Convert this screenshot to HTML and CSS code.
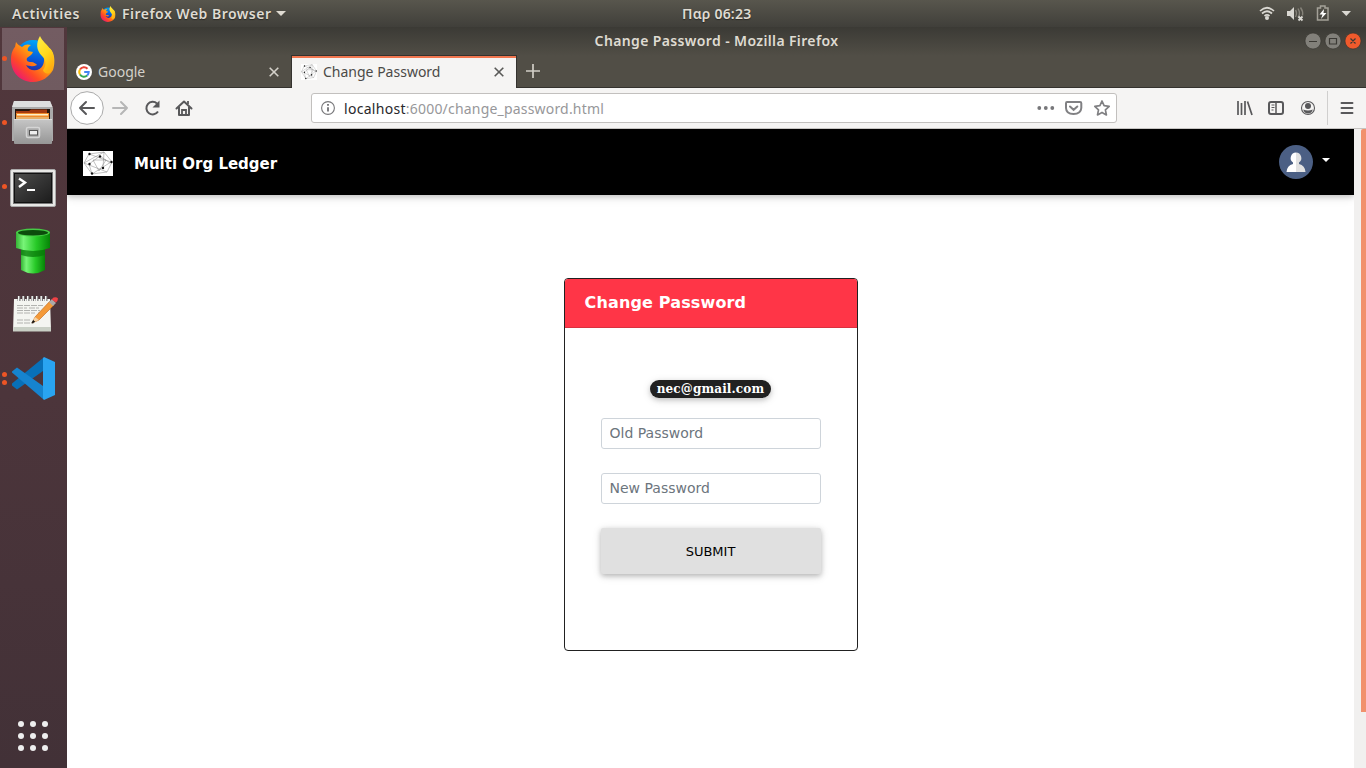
FILE: index.html
```html
<!DOCTYPE html>
<html lang="en">
<head>
<meta charset="utf-8">
<title>Change Password</title>
<link rel="stylesheet" href="styles.css">
</head>
<body>
<svg class="defs" width="0" height="0">
  <defs>
    <linearGradient id="ffOrange" x1="0.9" y1="0.1" x2="0.1" y2="0.9"><stop offset="0" stop-color="#ffdf25"/><stop offset=".4" stop-color="#ff9a10"/><stop offset=".7" stop-color="#ff4a25"/><stop offset="1" stop-color="#e9127c"/></linearGradient>
    <linearGradient id="ffBlue" x1="0.6" y1="0" x2="0.4" y2="1"><stop offset="0" stop-color="#00a8fa"/><stop offset=".55" stop-color="#0756d8"/><stop offset="1" stop-color="#36188b"/></linearGradient>
    <linearGradient id="ffYellow" x1="0" y1="0" x2=".5" y2="1"><stop offset="0" stop-color="#fff04a"/><stop offset=".6" stop-color="#ffd81c"/><stop offset="1" stop-color="#ffae10"/></linearGradient>
    <linearGradient id="steel" x1="0" y1="0" x2="0" y2="1"><stop offset="0" stop-color="#c6c6c6"/><stop offset="1" stop-color="#969696"/></linearGradient>
    <linearGradient id="screen" x1="0" y1="0" x2="1" y2="1"><stop offset="0" stop-color="#4d4d4b"/><stop offset=".5" stop-color="#343434"/><stop offset="1" stop-color="#1d1d1d"/></linearGradient>
    <linearGradient id="pipe" x1="0" y1="0" x2="1" y2="0"><stop offset="0" stop-color="#35b535"/><stop offset=".22" stop-color="#78f478"/><stop offset=".6" stop-color="#27c927"/><stop offset="1" stop-color="#068406"/></linearGradient>
    <symbol id="firefox" viewBox="0 0 44 46">
      <circle cx="22" cy="22" r="18" fill="url(#ffBlue)"/>
      <path d="M5 6 C6 8 9 10 11 11 C14 8 17 8 20 9 C17 11 16 13 17 15 L22 16 C21 19 18 20 16 22 C15 25 17 26 20 26 C23 26 25 28 26 29 C22 31 18 30 15 29 C18 36 29 36 32 29 C34 24 33 20 31 15 L34 10 C39 12 40 13 41 15 C44 20 44 28 42 34 C38 41 31 46 22 46 C9 46 0 36 0 24 C0 17 2 13 4 11 Z" fill="url(#ffOrange)"/>
      <path d="M29 0 C31 5 36 8 40 14 C44 20 43 27 40 35 C38 39 33 38 32 34 C36 29 35 24 31 20 C25 14 25 7 29 0Z" fill="url(#ffYellow)"/>
    </symbol>
    <symbol id="network" viewBox="0 0 30 25">
      <rect width="30" height="25" fill="#fff"/>
      <path d="M1 12 6 3 21 1 29 11 24 21 9 23ZM6 3 28 11M28 11 9 23M1 12 21 1M6 13 17 5 27 12M10 9 23 9 16 20ZM1 12 24 21M6 13 9 23M21 1 20 17" fill="none" stroke="#777" stroke-width=".45"/>
      <g fill="#111"><circle cx="6.500" cy="3" r="1.200"/><circle cx="17" cy="5.500" r="1.200"/><circle cx="28.500" cy="11" r="1.200"/><circle cx="6.500" cy="13" r="1.200"/><circle cx="20" cy="17" r="1.200"/><circle cx="9" cy="22.500" r="1.200"/></g>
    </symbol>
  </defs>
</svg>

<header class="topbar">
  <span class="activities">Activities</span>
  <svg class="app-logo" width="16" height="16" viewBox="0 0 44 46"><use href="#firefox"/></svg>
  <span class="app-name">Firefox Web Browser</span>
  <i class="caret"></i>
  <span class="clock">Παρ 06:23</span>
  <svg class="tray" width="110" height="27" viewBox="0 0 110 27">
    <g fill="none" stroke="#dad8d2" stroke-width="1.700"><path d="M6 11Q13 4.500 20 11M8 13.500Q13 9 18 13.500M10.500 16Q13 13.800 15.500 16"/></g>
    <circle cx="13" cy="18" r="2" fill="#dad8d2"/>
    <path d="M33 11h3l4-4v13l-4-4h-3z" fill="#dad8d2"/>
    <path d="M41.500 10q2 3 0 7M44 8.500q3 5 0 9M46.500 7.500q3 4 2 8" stroke="#858279" stroke-width="1.400" fill="none"/>
    <path d="M44.500 16.500l4 4m0-4l-4 4" stroke="#dad8d2" stroke-width="1.800"/>
    <path d="M66.500 6v2h-3v12h10.500V8h-3V6z" fill="none" stroke="#a4a198" stroke-width="1.500"/>
    <path d="M70 9l-4.500 5.500h3L67 19l5.500-6h-3z" fill="#fff"/>
    <path d="M87.500 11h9.500l-4.700 5z" fill="#dad8d2"/>
  </svg>
</header>

<div class="desktop">
  <nav class="dock">
    <div class="dock-item active"><i class="dot"></i>
      <svg class="ff" width="44" height="46"><use href="#firefox"/></svg></div>
    <div class="dock-item"><i class="dot"></i>
      <svg width="44" height="44" viewBox="0 0 44 44">
        <path d="M3 0h36l3 7v33H1V7z" fill="#aaa"/><path d="M3 0h36l2.500 6H1z" fill="#dedede"/>
        <path d="M4 8h35v11H4z" fill="#24160f"/><path d="M5 10h13l2-1.500h16V18H5z" fill="#a53a10"/><path d="M5 12h33v6H5z" fill="#f08a2a"/><path d="M6 13h31v1.500H6z" fill="#fff0c8"/><path d="M5 16h33v3H5z" fill="#e7af69"/>
        <rect x="3" y="18" width="38" height="25" rx="1" fill="url(#steel)"/><path d="M3 18.500h38" stroke="#ddd"/><rect x="15.500" y="26.500" width="13" height="10" rx="1.500" fill="#aaa" stroke="#d5d5d5" stroke-width="1.500"/><rect x="18.500" y="29.500" width="8" height="4.500" fill="#eee" stroke="#555"/>
      </svg></div>
    <div class="dock-item"><i class="dot"></i>
      <svg class="term" width="46" height="38" viewBox="0 0 46 38">
        <rect x=".5" y=".5" width="45" height="37" rx="1.500" fill="#e8e8e6" stroke="#aaa"/><rect x="3.500" y="3.500" width="39" height="31" fill="#111" stroke="#777"/><path d="M5 5h36v28H5z" fill="url(#screen)"/><path d="M9 9.500l6 4-6 4.500" fill="none" stroke="#fff" stroke-width="2.400"/><path d="M17 21h8" stroke="#fff" stroke-width="2"/>
      </svg></div>
    <div class="dock-item">
      <svg width="36" height="46" viewBox="0 0 36 46">
        <path d="M6 21h24v21q-12 7-24 0z" fill="url(#pipe)"/><path d="M6 21h24v6q-12 4-24 0z" fill="#087a0a" opacity=".75"/>
        <path d="M1 4h34v16q-17 6-34 0z" fill="url(#pipe)"/><ellipse cx="18" cy="4.500" rx="17" ry="4" fill="#45ca45"/><ellipse cx="18" cy="4.700" rx="15" ry="2.800" fill="#0c4c0c"/>
      </svg></div>
    <div class="dock-item">
      <svg class="notes" width="46" height="38" viewBox="0 0 46 38">
        <path d="M2 4h36l1 32H1z" fill="#f4f5f1"/><path d="M1.500 32h37.500v4.500H1z" fill="#c9cfc5"/>
        <path d="M7 1v5m4.500-5v5M16 1v5m4.500-5v5M25 1v5m4.500-5v5M34 1v5" stroke="#666" stroke-width="2.800"/><path d="M6.700 1v5m4.500-5v5m4.500-5v5m4.500-5v5m4.500-5v5m4.500-5v5m4.500-5v5" stroke="#fff" stroke-width="1.300"/>
        <path d="M5 10.500h26M5 13h10m2 0h10M5 15.500h23M5 18h18m3 0h3M5 25h13M5 28h17" stroke="#aaaca8" stroke-width=".9" stroke-dasharray="6 1"/>
        <path d="M20 28l3-6L38 6l4 4-15 15z" fill="#f49a38" stroke="#bd6417" stroke-width=".6"/><path d="M20 28l3-6 4 3z" fill="#f5d2a4"/><path d="M20 28l1.200-2.500 1.500 1.200z" fill="#111" stroke="#111" stroke-width=".8"/><path d="M37 7l3-3 4 4-3 3z" fill="#aaa"/><path d="M39.500 4.500l2-2q3-1 4.500 1 0 2-2 4z" fill="#ef4145"/>
      </svg></div>
    <div class="dock-item"><i class="dot twin"></i>
      <svg width="43" height="43" viewBox="0 0 43 43">
        <path d="M31 1v13L5 32.500 0 28.500v-2z" fill="#0870b8"/><path d="M5 10.500L31 29v13L0 15.500v-1z" fill="#1684cf"/><path d="M31 1l1-1 11 5v33l-11 5-1-1z" fill="#29a4f1"/>
      </svg></div>
    <svg class="apps" width="34" height="34" viewBox="0 0 34 34"><g fill="#eee"><circle cx="5" cy="5" r="3"/><circle cx="17" cy="5" r="3"/><circle cx="29" cy="5" r="3"/><circle cx="5" cy="17" r="3"/><circle cx="17" cy="17" r="3"/><circle cx="29" cy="17" r="3"/><circle cx="5" cy="29" r="3"/><circle cx="17" cy="29" r="3"/><circle cx="29" cy="29" r="3"/></g></svg>
  </nav>

  <section class="window">
    <div class="titlebar">
      <span class="window-title">Change Password - Mozilla Firefox</span>
      <svg class="controls" width="58" height="18" viewBox="0 0 58 18">
        <g fill="#82807a" stroke="#34332e" stroke-width=".6"><circle cx="9" cy="9" r="8"/><circle cx="29" cy="9" r="8"/><circle cx="49" cy="9" r="8" fill="#f05a2c"/></g>
        <path d="M5 9.500h8M25.500 6.500h7v5.500h-7zM46.500 6.500l5 5m0-5l-5 5" fill="none" stroke="#3b3934" stroke-width="1.200"/>
      </svg>
    </div>
    <div class="tabs">
      <div class="tab">
        <svg width="16" height="16" viewBox="0 0 16 16"><circle cx="8" cy="8" r="8" fill="#fff"/><g fill="none" stroke-width="2"><path d="M11.500 4.700A4.700 4.700 0 0 0 4 5.600" stroke="#ea4335"/><path d="M4 5.500a4.700 4.700 0 0 0 0 5" stroke="#fbbc05"/><path d="M4 10.400a4.700 4.700 0 0 0 7.200 1.100" stroke="#34a853"/><path d="M11.200 11.500Q12.700 10 12.700 8H8.200" stroke="#4285f4"/></g></svg>
        <span class="tab-name google">Google</span>
        <svg class="close" width="10" height="10" viewBox="0 0 10 10"><path d="M.7.700l8.600 8.600m0-8.600L.7 9.300" stroke="currentColor" stroke-width="1.600"/></svg>
      </div>
      <div class="tab selected">
        <svg class="favicon" width="16" height="16" viewBox="0 0 30 25" preserveAspectRatio="none"><use href="#network" width="30" height="25"/></svg>
        <span class="tab-name change">Change Password</span>
        <svg class="close" width="10" height="10" viewBox="0 0 10 10"><path d="M.7.700l8.600 8.600m0-8.600L.7 9.300" stroke="currentColor" stroke-width="1.600"/></svg>
      </div>
      <svg class="plus" width="14" height="14" viewBox="0 0 14 14"><path d="M0 7h14M7 0v14" stroke="#d1cec6" stroke-width="1.700"/></svg>
    </div>
    <div class="toolbar">
      <svg class="nav-icons" width="130" height="40" viewBox="0 0 130 40" fill="none" stroke="#58585a" stroke-width="2">
        <circle cx="20" cy="20" r="16.300" fill="#fff" stroke="#aaa" stroke-width="1"/>
        <path d="M27 20H13m6-6L13 20l6 6" stroke-linecap="round" stroke-linejoin="round"/>
        <path d="M46 20h14m-6-6l6 6-6 6" stroke="#b6b6b6" stroke-linecap="round" stroke-linejoin="round"/>
        <path d="M91 23.500A6.300 6.300 0 1 1 90 15.500"/><path d="M92.500 12.500v7h-7z" fill="#58585a" stroke="none"/>
        <path d="M109.500 20.500l7.500-7 7.500 7M112 19v8h10v-8" stroke-linecap="round" stroke-linejoin="round"/><path d="M115 27v-5h4v5M121 13v3" stroke-width="1.800"/>
      </svg>
      <div class="address">
        <svg width="16" height="16" viewBox="0 0 16 16"><circle cx="8" cy="8" r="6.400" fill="none" stroke="#77777a" stroke-width="1.100"/><path d="M8 7.200v4.300M8 4v1.700" stroke="#66666a" stroke-width="1.700"/></svg>
        <span class="url"><b>localhost</b>:6000/change_password.html</span>
        <svg class="page-icons" width="74" height="18" viewBox="0 0 74 18" fill="none" stroke="#808083" stroke-width="2">
          <g fill="#77777a" stroke="none"><circle cx="2.300" cy="9" r="1.900"/><circle cx="8.800" cy="9" r="1.900"/><circle cx="15.300" cy="9" r="1.900"/></g>
          <path d="M30 3h13q1.300 0 1.300 1.200V9q-.5 6-7.800 6T29 9V4.200Q29 3 30 3z"/><path d="M33 7.500l3.600 3.300 3.700-3.300" stroke-linecap="round"/>
          <path d="M65 2l2.100 4.700 5.100.6-3.800 3.500 1 5.100-4.400-2.500-4.500 2.500 1-5.100-3.700-3.500 5.100-.6z" stroke-width="1.700" stroke-linejoin="round"/>
        </svg>
      </div>
      <svg class="menu-icons" width="136" height="40" viewBox="0 0 136 40" fill="none" stroke="#58585a" stroke-width="2">
        <path d="M8 13v14M11.500 15v12M15 13v14M17.500 13.500L22 27" stroke-width="1.700"/>
        <rect x="39" y="14" width="14" height="12" rx="2"/><path d="M46 14v12" stroke-width="1.500"/><path d="M41.500 17h3m-3 2.500h3m-3 2.500h2" stroke-width="1"/>
        <circle cx="78" cy="20" r="6.500" stroke-width="1.100"/><circle cx="78" cy="18" r="3" fill="#58585a" stroke="none"/><path d="M73.200 21.500q4.800 2 9.600 0-1 4-4.800 4t-4.800-4z" fill="#58585a" stroke="none"/>
        <path d="M97.500 3v34" stroke="#d0cfce" stroke-width="1"/><path d="M111.500 15h11m-11 5h11m-11 5h11" stroke-linecap="round" stroke-width="1.900"/>
      </svg>
    </div>
    <div class="viewport">
      <main class="page">
        <header class="site-header">
          <svg width="30" height="25"><use href="#network"/></svg>
          <span class="brand">Multi Org Ledger</span>
          <svg class="avatar" width="34" height="34" viewBox="0 0 34 34"><circle cx="17" cy="17" r="17" fill="#4b5f84"/><path d="M17 7.500a5.500 5.500 0 0 0-3 10v1.500q-6 1.500-6.500 8H17z" fill="#fff"/><path d="M17 7.500a5.500 5.500 0 0 1 3 10v1.500q6 1.500 6.500 8H17z" fill="#e2e2e2"/></svg>
          <i class="user-caret"></i>
        </header>
        <form class="card">
          <div class="card-title">Change Password</div>
          <div class="card-body">
            <span class="badge">nec@gmail.com</span>
            <input class="field" type="password" placeholder="Old Password">
            <input class="field" type="password" placeholder="New Password">
            <button class="submit" type="button">SUBMIT</button>
          </div>
        </form>
      </main>
      <div class="scrollbar"><div class="thumb"></div></div>
    </div>
  </section>
</div>
</body>
</html>
```
FILE: styles.css
```css
* { box-sizing: border-box; }
body { margin: 0; width: 1366px; height: 768px; overflow: hidden; background: #fff; font-family: "Noto Sans", sans-serif; display: flex; flex-direction: column; }
svg { display: block; flex: none; }
.defs { position: absolute; }
.topbar { height: 27px; flex: none; display: flex; align-items: center; padding-left: 12px; color: #dfdbd2; font-size: 14px; font-weight: 600; line-height: 27px; white-space: nowrap; background: linear-gradient(#58564d, #403f3a); text-shadow: 0 1px 1px #292824; }
.activities { width: 88px; letter-spacing: .55px; }
.app-logo { margin-right: 6px; }
.app-name { width: 154px; letter-spacing: .48px; }
.caret { border: 5px solid transparent; border-top-color: #dfdbd2; border-bottom: 0; }
.clock { margin-left: 396px; letter-spacing: .2px; }
.tray { margin-left: auto; margin-right: 2px; }
.desktop { flex: 1; display: flex; min-height: 0; }
.dock { width: 67px; flex: none; display: flex; flex-direction: column; align-items: center; background: linear-gradient(#51373c, #4c353b 50%, #423137); }
.dock-item { width: 67px; height: 64px; flex: none; display: grid; grid-template-columns: 8px 1fr; align-items: center; }
.dock-item svg { grid-column: 2; grid-row: 1; justify-self: center; margin-right: 9px; margin-bottom: 1px; }
.dock-item.active { background: linear-gradient(#735c62, #705b60) 2px 1px / 62px 62px no-repeat; }
.dock-item svg.term { margin-top: 3px; }
.dock-item svg.notes { margin-left: 3px; margin-bottom: 2px; }
.dot { grid-column: 1; grid-row: 1; width: 5px; height: 5px; margin-left: 2px; margin-bottom: 1px; border-radius: 50%; background: #ed5525; }
.dot.twin { margin-top: -8px; box-shadow: 0 8px #ed5525; }
.apps { margin-top: auto; margin-bottom: 15px; margin-left: -1px; }
.window { flex: 1; display: flex; flex-direction: column; min-width: 0; background: linear-gradient(#3b3a35, #514e46 29px); }
.titlebar { height: 28px; flex: none; display: grid; grid-template-columns: 1fr auto; align-items: center; color: #dfdbd2; font-size: 14px; font-weight: 600; }
.window-title { padding-left: 62px; padding-bottom: 2px; text-align: center; white-space: nowrap; letter-spacing: .37px; }
.controls { margin-right: 4px; }
.tabs { height: 33px; flex: none; display: flex; align-items: stretch; border-bottom: 1px solid #34322e; }
.tab { width: 224px; display: flex; align-items: center; padding: 1px 12px 0 9px; color: #d4d1ca; font-size: 14px; }
.tab-name { margin-left: 6px; white-space: nowrap; }
.close { margin-left: auto; }
.tab.selected { width: 226px; padding-top: 0; color: #4b4a47; background: #f5f4f3; border: solid #34322e; border-width: 1px 1px 0; margin-bottom: -1px; box-shadow: inset 0 2px #f1764f; }
.tab.selected .close { color: #595957; }
.tab.selected .change { margin-top: -2px; }
.plus { margin: 9px 0 0 9px; }
.toolbar { height: 41px; flex: none; display: flex; align-items: center; background: #f5f4f3; border-bottom: 1px solid #c6c4c2; }
.address { width: 806px; height: 30px; margin-left: 114px; display: flex; align-items: center; background: #fff; border: 1px solid #c2c0be; border-radius: 3px; padding: 0 5px 0 8px; }
.url { margin-left: 8px; font-size: 14px; letter-spacing: .19px; color: #97979a; white-space: nowrap; }
.url b { color: #28282b; font-weight: 400; letter-spacing: .3px; }
.page-icons { margin-left: auto; }
.menu-icons { margin-left: auto; }
.viewport { flex: 1; display: flex; min-height: 0; background: #fff; }
.page { width: 1287px; display: flex; flex-direction: column; align-items: center; font-family: "DejaVu Sans", sans-serif; overflow: hidden; }
.site-header { width: 100%; height: 66px; flex: none; display: flex; align-items: center; padding: 2px 24px 0 16px; background: #000; color: #fff; box-shadow: 0 2px 5px rgba(0,0,0,.16), 0 2px 10px rgba(0,0,0,.12); }
.brand { margin-left: 21px; padding-top: 2px; font-size: 15px; font-weight: 700; }
.avatar { margin-left: auto; margin-right: 9px; margin-top: -2px; }
.user-caret { margin-top: -6px; border: 4.5px solid transparent; border-top-color: #fff; border-bottom: 0; }
.card { width: 294px; height: 373px; margin: 83px 0 0; background: #fff; border: 1px solid #212121; border-radius: 4px; overflow: hidden; }
.card-title { height: 49px; padding: 0 20px; line-height: 47px; font-size: 16px; letter-spacing: .15px; font-weight: 700; color: #fff; background: #ff3547; border-bottom: 1px solid #d9313f; }
.card-body { display: flex; flex-direction: column; align-items: center; padding: 52px 35px 0; }
.badge { height: 18px; padding: 0 7px; font: 700 12px/18px "DejaVu Serif", serif; letter-spacing: .13px; color: #fff; background: #212121; border-radius: 10px; box-shadow: 0 2px 5px rgba(0,0,0,.16), 0 2px 10px rgba(0,0,0,.12); margin-bottom: 20px; }
.field { width: 220px; height: 31px; margin: 0 0 24px; padding: 0 8px 2px; border: 1px solid #ced4da; border-radius: 3px; font: 14px "DejaVu Sans", sans-serif; background: #fff; }
.field::placeholder { color: #6c757d; opacity: 1; }
.submit { width: 220px; height: 46px; border: 0; border-radius: 2px; background: #e0e0e0; color: #000; font: 13px "DejaVu Sans", sans-serif; box-shadow: 0 2px 5px rgba(0,0,0,.2), 0 2px 10px rgba(0,0,0,.14); }
.scrollbar { width: 12px; background: #f1f0ef; display: flex; justify-content: flex-end; }
.thumb { width: 5px; height: 583px; background: #f1916d; border-radius: 2px 0 0 0; }
```
